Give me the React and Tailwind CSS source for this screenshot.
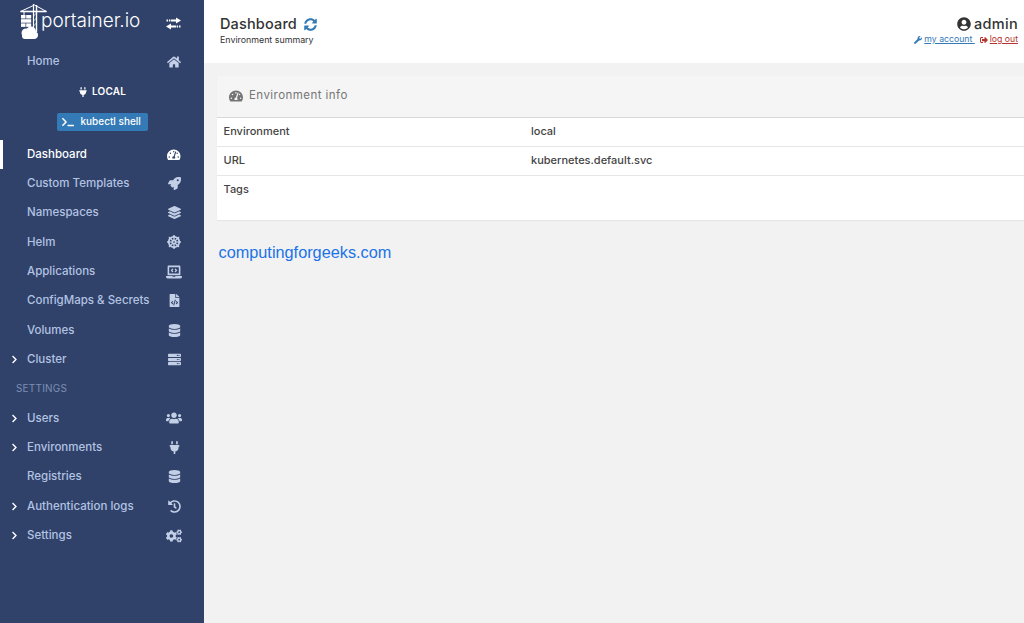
import React from "react";
import {
  FaHome, FaPlug, FaTachometerAlt, FaRocket, FaLayerGroup, FaDharmachakra, FaLaptopCode, FaFileCode,
  FaDatabase, FaServer, FaUsers, FaHistory, FaCogs, FaSyncAlt, FaUserCircle, FaWrench,
  FaSignOutAlt, FaChevronRight, FaTerminal,
} from "react-icons/fa";

function Logo() {
  return (
    <svg width="27" height="36" viewBox="0 0 27 36" className="shrink-0" fill="none">
      <g stroke="#fff" strokeWidth="1">
        <path d="M0.5 7.5 L14.5 1 L26.5 7.5" />
        <path d="M0.5 7.5 H26.5" strokeWidth="1.6" />
        <path d="M13.5 0 V26" strokeWidth="1.2" />
        <path d="M16.5 1 V28" strokeWidth="1.4" />
        <path d="M13.5 12 L16.5 9 M13.5 17 L16.5 14 M13.5 22 L16.5 19" strokeWidth="0.7" />
        <path d="M4 8 V11" />
      </g>
      <g fill="#fff">
        <rect x="1" y="11" width="4.5" height="3.5" />
        <rect x="6.2" y="11" width="5" height="3.5" />
        <rect x="1" y="15.2" width="10.2" height="3.5" />
        <rect x="1" y="19.4" width="4.5" height="3.5" />
        <rect x="6.2" y="19.4" width="5" height="3.5" />
        <circle cx="6" cy="29" r="4.5" />
        <circle cx="11" cy="27.5" r="5" />
        <circle cx="14.5" cy="31" r="3.5" />
        <rect x="2" y="29" width="15" height="6" rx="3" />
      </g>
    </svg>
  );
}

function Transfer() {
  return (
    <svg width="15" height="13" viewBox="0 0 15 13" className="shrink-0" fill="#fff">
      <path d="M10 0.5 L15 3.5 L10 6.5 Z" />
      <rect x="5" y="2.5" width="6" height="2" />
      <rect x="0.5" y="2.5" width="1.6" height="2" />
      <rect x="3" y="2.5" width="1.4" height="2" />
      <path d="M5 6.5 L0 9.5 L5 12.5 Z" />
      <rect x="4" y="8.5" width="6" height="2" />
      <rect x="10.6" y="8.5" width="1.4" height="2" />
      <rect x="12.9" y="8.5" width="1.6" height="2" />
    </svg>
  );
}

function Row({ label, Icon, chevron, active, iconSize = 13 }) {
  return (
    <div className={`relative flex h-[29.33px] items-center ${active ? "text-white" : "text-[#b3c3e2]"}`}>
      {active && <div className="absolute left-0 top-0 h-full w-[3px] bg-white" />}
      <div className="flex w-[27px] shrink-0 justify-center pl-[1px]">
        {chevron && <FaChevronRight className="text-white" size={9} />}
      </div>
      <span className="flex-1 whitespace-nowrap text-[11.5px] font-medium">{label}</span>
      <div className={`mr-[23px] flex w-[14px] justify-center ${active ? "text-white" : "text-[#c2cfe6]"}`}>
        <Icon size={iconSize} className="shrink-0" />
      </div>
    </div>
  );
}

export default function App() {
  return (
    <div className="flex h-[623px] w-[1024px] overflow-hidden bg-[#f2f2f2] font-['Inter',sans-serif] text-[#333]">
      <aside className="flex w-[204px] shrink-0 flex-col bg-[#30426a]">
        <div className="flex h-[47.3px] items-start pl-[20px] pr-[23px] pt-[4px]">
          <Logo />
          <span className="ml-[-6px] mt-[6px] flex-1 text-[19px] font-light leading-[22px] text-white">portainer.io</span>
          <div className="mt-[13px]"><Transfer /></div>
        </div>
        <Row label="Home" Icon={FaHome} iconSize={14} />
        <div className="flex h-[30px] items-center justify-center gap-[4px] text-[10px] font-semibold text-white">
          <FaPlug size={10} /> <span className="tracking-[0.2px]">LOCAL</span>
        </div>
        <div className="flex h-[30px] items-center justify-center">
          <div className="flex h-[18px] w-[91px] items-center gap-[7px] rounded-[2px] bg-[#337ab7] pl-[5px] text-[10px] font-medium text-white">
            <FaTerminal size={12} className="shrink-0" />
            <span className="whitespace-nowrap">kubectl shell</span>
          </div>
        </div>
        <div className="h-[3px]" />
        <Row label="Dashboard" Icon={FaTachometerAlt} iconSize={13.5} active />
        <Row label="Custom Templates" Icon={FaRocket} />
        <Row label="Namespaces" Icon={FaLayerGroup} />
        <Row label="Helm" Icon={FaDharmachakra} iconSize={14} />
        <Row label="Applications" Icon={FaLaptopCode} iconSize={16} />
        <Row label="ConfigMaps & Secrets" Icon={FaFileCode} />
        <Row label="Volumes" Icon={FaDatabase} />
        <Row label="Cluster" Icon={FaServer} chevron />
        <div className="flex h-[29.33px] items-center pl-[16px] text-[10px] font-normal tracking-[0.2px] text-[#7d8fb3]">SETTINGS</div>
        <Row label="Users" Icon={FaUsers} chevron iconSize={16} />
        <Row label="Environments" Icon={FaPlug} chevron />
        <Row label="Registries" Icon={FaDatabase} />
        <Row label="Authentication logs" Icon={FaHistory} chevron />
        <Row label="Settings" Icon={FaCogs} chevron iconSize={16} />
      </aside>
      <main className="flex min-w-0 flex-1 flex-col">
        <header className="flex h-[63px] shrink-0 justify-between bg-white pl-[16px] pr-[6px]">
          <div className="pt-[15px]">
            <div className="flex items-center gap-[7px] text-[14.5px] font-medium leading-[18px] tracking-[0.15px] text-[#333]">
              Dashboard <FaSyncAlt size={13} className="text-[#337ab7]" />
            </div>
            <div className="mt-[1px] text-[8.85px] leading-[11px] text-[#333]">Environment summary</div>
          </div>
          <div className="flex flex-col items-end pt-[15px]">
            <div className="flex items-center gap-[3px] text-[14.5px] font-medium leading-[18px] tracking-[0.3px] text-[#333]">
              <FaUserCircle size={14} /> admin
            </div>
            <div className="mt-[1px] flex items-center gap-[5px] text-[8.7px] leading-[11px]">
              <a className="flex items-center gap-[2px] text-[#337ab7] underline"><FaWrench size={8} /> my account&nbsp;</a>
              <a className="flex items-center gap-[2px] text-[#b5332e] underline"><FaSignOutAlt size={8} /> log out</a>
            </div>
          </div>
        </header>
        <section className="ml-[13px] mt-[13px] bg-white shadow-[0_1px_1px_rgba(0,0,0,0.05)]">
          <div className="flex h-[42px] items-center gap-[6px] border-b border-[#d8d8d8] bg-[#f5f5f5] pb-[1px] pl-[12px] text-[11.5px] font-normal tracking-[0.45px] text-[#767676]">
            <FaTachometerAlt size={14} /> Environment info
          </div>
          <div className="text-[11px] font-medium text-[#444]">
            <div className="flex h-[29px] items-center border-b border-[#e6e6e6] pb-[1px] pl-[6.5px]">
              <span className="w-[307.5px]">Environment</span><span>local</span>
            </div>
            <div className="flex h-[29px] items-center border-b border-[#e6e6e6] pb-[1px] pl-[6.5px]">
              <span className="w-[307.5px]">URL</span><span>kubernetes.default.svc</span>
            </div>
            <div className="flex h-[44px] items-start pl-[6.5px] pt-[5px]">
              <span className="w-[307.5px]">Tags</span>
            </div>
          </div>
        </section>
        <div className="ml-[14.5px] mt-[22px] font-['Liberation_Sans',sans-serif] text-[16.3px] leading-[20px] text-[#1a73e8]">computingforgeeks.com</div>
      </main>
    </div>
  );
}
